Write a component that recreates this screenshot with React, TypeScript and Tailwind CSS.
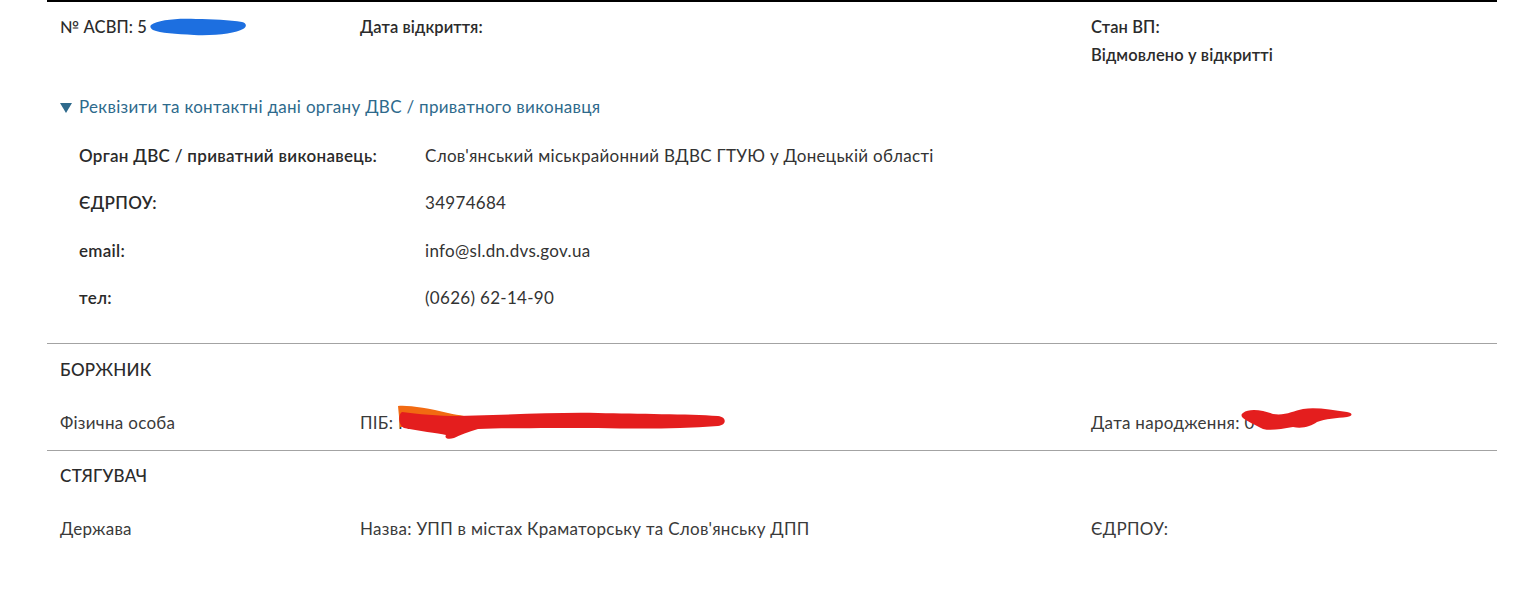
import React from "react";

const BlueScribble = () => (
  <svg className="absolute left-[90px] top-[3px]" width="98" height="22" viewBox="0 0 98 22">
    <path
      d="M1,9 C8,4 26,2 46,3 C62,3 80,4 92,6 C97,7 97,11 93,13 C86,17 66,20 44,19 C26,18 10,17 3,14 C0,12 0,10 1,9 Z"
      fill="#1d6fe0"
    />
  </svg>
);

const RedScribblePib = () => (
  <svg className="absolute left-[38px] top-[-6px]" width="330" height="36" viewBox="0 0 330 36">
    <path d="M0,1 C10,0 30,3 50,8 C62,11 72,11 76,13 L76,22 L2,22 Z" fill="#f26a12" />
    <path
      d="M4,7 C20,9 40,11 60,11 C110,10 160,7 200,8 C240,9 290,9 320,11 C329,12 329,20 320,21 C280,24 240,24 200,23 C160,23 110,23 80,24 C70,27 62,30 56,33 C50,35 46,33 48,30 C40,28 20,26 6,23 C0,20 0,9 4,7 Z"
      fill="#e41e1e"
    />
  </svg>
);

const RedScribbleDate = () => (
  <svg className="absolute left-[150px] top-[-4px]" width="112" height="26" viewBox="0 0 112 26">
    <path
      d="M2,6 C8,1 22,3 32,7 C44,9 52,4 62,2 C76,0 90,3 106,5 C112,6 112,9 106,10 C96,11 84,12 76,15 C70,19 62,22 52,20 C40,22 30,24 22,22 C14,18 6,14 2,11 C0,9 0,7 2,6 Z"
      fill="#e41e1e"
    />
  </svg>
);

const DetailRow = ({ label, value }: { label: string; value: string }) => (
  <div className="flex h-[47.5px] items-center">
    <div className="w-[346px] font-semibold text-[#2a2a2a]">{label}</div>
    <div className="text-[#333]">{value}</div>
  </div>
);

export default function App() {
  return (
    <div className="w-[1540px] h-[593px] overflow-hidden bg-white font-['Lato',sans-serif] text-[17px] tracking-[0.3px] text-[#2b2b2b]">
      <div className="ml-[47px] mr-[43px] border-t-2 border-black">
        <div className="grid grid-cols-[300px_731px_1fr] px-[13px] pt-[11px] leading-[28px] text-[16.5px] tracking-[0.1px]">
          <div className="relative font-medium">
            № АСВП: 5
            <BlueScribble />
          </div>
          <div className="font-semibold">Дата відкриття:</div>
          <div className="flex flex-col font-semibold">
            <span>Стан ВП:</span>
            <span>Відмовлено у відкритті</span>
          </div>
        </div>

        <div className="mt-[26px] flex items-center gap-[7px] px-[13px] leading-[24px] text-[#2e6a8c]">
          <svg width="12" height="10" viewBox="0 0 12 10" className="mt-[1px]">
            <path d="M0,0 L12,0 L6,10 Z" fill="#2e6a8c" />
          </svg>
          <span>Реквізити та контактні дані органу ДВС / приватного виконавця</span>
        </div>

        <div className="mt-[12.5px] mb-[21.5px] pl-[32px]">
          <DetailRow label="Орган ДВС / приватний виконавець:" value="Слов'янський міськрайонний ВДВС ГТУЮ у Донецькій області" />
          <DetailRow label="ЄДРПОУ:" value="34974684" />
          <DetailRow label="email:" value="info@sl.dn.dvs.gov.ua" />
          <DetailRow label="тел:" value="(0626) 62-14-90" />
        </div>

        <div className="border-t border-[#a3a3a3] px-[13px] pt-[14px] pb-[15px] leading-[24px]">
          <div className="font-medium uppercase">БОРЖНИК</div>
          <div className="mt-[29px] grid grid-cols-[300px_731px_1fr] text-[#3a3a3a]">
            <div>Фізична особа</div>
            <div className="relative">
              ПІБ: Н
              <RedScribblePib />
            </div>
            <div className="relative">
              Дата народження: 0
              <RedScribbleDate />
            </div>
          </div>
        </div>

        <div className="border-t border-[#a3a3a3] px-[13px] pt-[13px] leading-[24px]">
          <div className="font-medium uppercase">СТЯГУВАЧ</div>
          <div className="mt-[29px] grid grid-cols-[300px_731px_1fr] text-[#3a3a3a]">
            <div>Держава</div>
            <div>Назва: УПП в містах Краматорську та Слов'янську ДПП</div>
            <div>ЄДРПОУ:</div>
          </div>
        </div>
      </div>
    </div>
  );
}
